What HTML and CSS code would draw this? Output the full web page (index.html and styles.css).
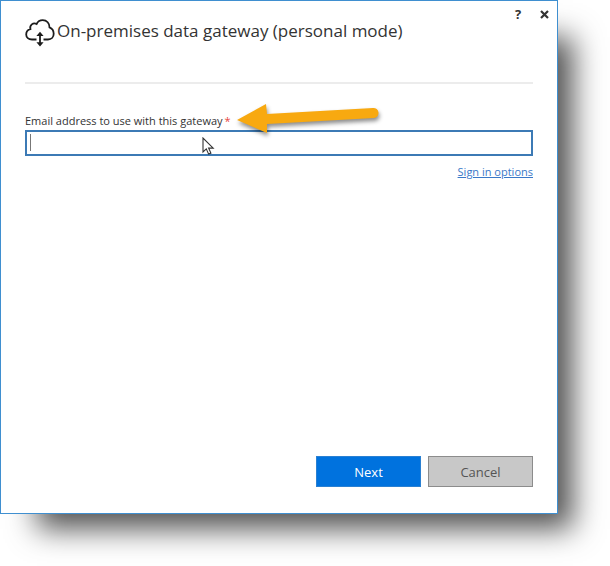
FILE: index.html
```html
<!DOCTYPE html>
<html lang="en">
<head>
  <meta charset="UTF-8">
  <title>On-premises data gateway (personal mode)</title>
  <meta name="viewport" content="width=device-width, initial-scale=1.0">
  <link rel="stylesheet" href="styles.css">
</head>
<body>
  <main class="dialog">
    <div class="window-buttons">
      <button type="button" aria-label="Help">?</button>
      <button type="button" aria-label="Close">
        <svg width="9" height="9" viewBox="0 0 9 9"><path d="M1 1l7 7M8 1L1 8" stroke="#333" stroke-width="2.2"/></svg>
      </button>
    </div>

    <header>
      <svg class="logo" width="30" height="28" viewBox="0 0 30 28" fill="none" stroke="#1c1c1c" stroke-width="1.8">
        <path d="M11.500 20.500H7C3.500 20.500 1.200 18.500 1.200 15.600C1.200 12.600 3.200 10.700 5.400 10.200C4.300 6.200 8.200 3 11.600 5C12.800 2.600 15.100 1.200 17.700 1.200C21.800 1.200 24.600 4.300 24.500 8.300C27 9.300 28.700 11.800 28.700 14.700C28.700 18.300 26.300 20.500 23 20.500H18.500"/>
        <path d="M15 16v9"/>
        <path d="M15 12.800l3.600 4.200h-7.200zM15 27.400l3.600-4.200h-7.200z" fill="#1c1c1c" stroke="none"/>
      </svg>
      <h1>On-premises data gateway (personal mode)</h1>
    </header>

    <form>
      <label for="email">Email address to use with this gateway<span class="required">*</span></label>
      <div class="field">
        <input type="email" id="email" required>
        <span class="caret"></span>
        <svg class="pointer" width="13" height="19" viewBox="0 0 13 19">
          <path d="M1 1v14l3.300-3.100 2.300 5.200 2.300-1-2.300-5h4.600z" fill="#fff" stroke="#333" stroke-width="1.100"/>
        </svg>
        <svg class="arrow" width="150" height="38" viewBox="0 0 150 38">
          <path d="M3 18L32 2L33 12L139 6A5 5 0 0 1 140 16L33 22L33 31Z" fill="#f8a910"/>
        </svg>
      </div>
      <a class="options" href="#">Sign in options</a>

      <div class="actions">
        <button type="button" class="next">Next</button>
        <button type="button" class="cancel">Cancel</button>
      </div>
    </form>
  </main>
</body>
</html>
```
FILE: styles.css
```css
* {
  box-sizing: border-box;
}
body {
  font-family: 'Open Sans', 'Noto Sans', sans-serif;
  background: #fff;
  margin: 0;
  color: #333;
}
.dialog {
  display: flex;
  flex-direction: column;
  min-height: calc(100vh - 52px);
  margin: 0 52px 52px 0;
  padding: 4px 24px 26px;
  background: #fff;
  border: 1px solid #3f8fd0;
  box-shadow: 26px 26px 28px -11px rgba(0, 0, 0, 0.68);
}
.window-buttons {
  display: flex;
  justify-content: flex-end;
  gap: 8px;
  margin-right: -20px;
}
.window-buttons button {
  display: flex;
  align-items: center;
  justify-content: center;
  width: 18px;
  height: 18px;
  padding: 0;
  border: none;
  background: none;
  color: #333;
  font: bold 13px 'Open Sans', sans-serif;
}
header {
  display: flex;
  gap: 2px;
  height: 61px;
  border-bottom: 2px solid #ececec;
}
.logo {
  margin-top: -4px;
}
h1 {
  margin: -4px 0 0;
  font-size: 17px;
  line-height: 24px;
  font-weight: 500;
  color: #333;
}
form {
  display: flex;
  flex-direction: column;
  flex: 1;
  padding-top: 28px;
}
label {
  font-size: 11px;
  line-height: 18px;
}
.required {
  margin-left: 2px;
  color: #e8483f;
}
.field {
  position: relative;
}
.field input {
  display: block;
  width: 100%;
  height: 26px;
  padding: 0 4px;
  border: 2px solid #3c7ab5;
  background: #fff;
  font: inherit;
  font-size: 11px;
  outline: none;
}
.caret {
  position: absolute;
  top: 4px;
  left: 5px;
  width: 1px;
  height: 17px;
  background: #777;
}
.pointer {
  position: absolute;
  top: 7px;
  left: 177px;
}
.arrow {
  position: absolute;
  top: -28px;
  left: 209px;
  filter: drop-shadow(1px 3px 2px rgba(0, 0, 0, 0.45));
}
.options {
  align-self: flex-end;
  margin-top: 8px;
  font-size: 11px;
  line-height: 16px;
  color: #3a78c8;
}
.actions {
  display: flex;
  justify-content: flex-end;
  gap: 7px;
  margin-top: auto;
}
.actions button {
  width: 105px;
  height: 31px;
  padding: 0;
  font: 13px 'Open Sans', sans-serif;
}
.next {
  background: #0072de;
  border: 1px solid #2a80d2;
  color: #fff;
}
.cancel {
  background: #c8c8c8;
  border: 1px solid #8c8c8c;
  color: #555;
}
```
